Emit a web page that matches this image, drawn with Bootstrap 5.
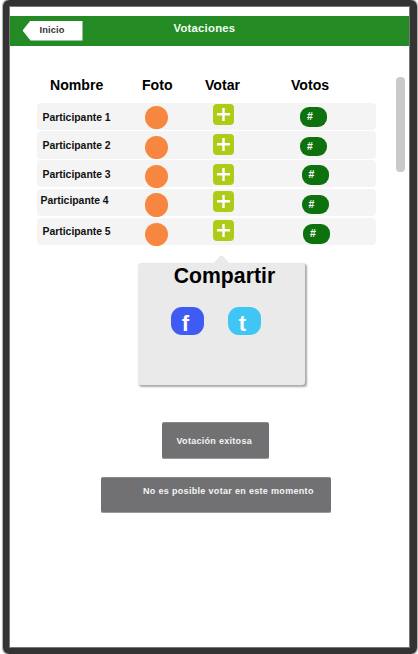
<!DOCTYPE html>
<html lang="es">
<head>
<meta charset="utf-8">
<meta name="viewport" content="width=device-width, initial-scale=1">
<title>Votaciones</title>
<link href="https://cdn.jsdelivr.net/npm/bootstrap@5.3.0/dist/css/bootstrap.min.css" rel="stylesheet">
<style>
body{font-family:"Liberation Sans",Arial,sans-serif;font-weight:700;color:#111;line-height:1;background:#fff}
.device{width:414px;height:654px;margin-left:3px;border:6px solid #333;border-width:6.5px 7px 6px 6px;border-radius:6px;box-shadow:0 0 1px 1px #aaa,inset 0 0 0 1px #777;padding:9.5px 1px 0 1px}
.topbar{height:30px;background:#248a24;padding:5px 0 0 12.5px}
.back{width:60px;height:20px;padding:1px 0 0 17px;background:#fff;color:#333;font-size:9.3px;letter-spacing:.12px;clip-path:polygon(0 50%,8px 0,100% 0,100% 100%,8px 100%)}
.bar-title{margin:2px 0 0 91px;font-size:11.3px;letter-spacing:.24px;color:#f2fff2;line-height:11px}
.board{margin:31px 0 0 26.5px}
.roster{width:339px}
.cols{display:grid;grid-template-columns:109px 67.5px 87px 75px}
.heads{font-size:14.1px;height:26px;line-height:16px;color:#000}
.heads span:nth-child(1){padding-left:13.5px}
.heads span:nth-child(2){margin-left:-3.5px}
.heads span:nth-child(3){margin-left:-8px}
.heads span:nth-child(4){margin-left:-9px}
.entry{height:27.4px;margin-bottom:1.4px;background:#f4f4f4;border-radius:4px;align-items:start}
.who{font-size:10.4px;padding-left:6px;line-height:12px;margin-top:9px}
.face,.vote,.count{position:relative;z-index:1}
.face{width:23.4px;height:23.4px;margin-left:-.5px;border-radius:50%;background:#f78640}
.vote{width:21px;height:21px;border:0;padding:0;border-radius:4px;background:#adcb17;display:block}
.vote svg{display:block}
.count{width:27px;height:19.4px;border-radius:9px;background:#0d720d;color:#fff;font-size:10.5px;line-height:19px;padding-left:7px}
.r1 .face{margin-top:3.5px}.r1 .vote{margin-top:1.2px}.r1 .count{margin-top:4.9px}
.r2 .face{margin-top:4.8px}.r2 .vote{margin-top:2.4px}.r2 .count{margin-top:5.4px}
.r3 .face{margin-top:4.8px}.r3 .vote{margin-top:3.6px}.r3 .count{margin:5.2px 0 0 1.5px}
.r4 .face{margin-top:4.4px}.r4 .vote{margin-top:2.5px}.r4 .count{margin:6px 0 0 1.5px}
.r5 .face{margin-top:5.4px}.r5 .vote{margin-top:2.7px}.r5 .count{margin:6.8px 0 0 3px}
.r4 .who{padding-left:4px;margin-top:6.2px;height:10.9px;overflow:hidden}
.r5 .who{margin-top:8px}
.scroller{width:9px;height:95px;border-radius:4px;background:#cacaca;margin-left:20.5px}
.share{margin:8.5px 0 0 128px;width:167px}
.tip{display:block;margin-left:76px}
.panel{height:122px;background:#eaeaea;border-radius:3px;box-shadow:1.5px 1.5px 2px #aaa}
.panel h2{font-size:21.2px;font-weight:700;color:#000;letter-spacing:.05px;line-height:26px;margin:0;padding-left:6px}
.social{width:33px;height:28px;border-radius:11px;color:#fff;font-size:22px;line-height:33px;padding:0 3px 0 0;text-align:center;text-decoration:none}
.fb{background:#3f5bf3;margin:10.5px 0 0 32.5px}
.tw{background:#40c6f5;margin:9.7px 0 0 24px}
.notice{background:#717173;color:#f4f4f4;font-size:9px;border-radius:2px;border-bottom:1px solid #999;border-top:1px solid #8b8b8b}
.ok{width:107px;height:37px;margin:37px 0 0 152px;padding:14px 0 0 14.5px;letter-spacing:.29px}
.fail{width:230px;height:36px;margin:18px 0 0 90.5px;padding:9px 0 0 42.5px;letter-spacing:.32px}
</style>
</head>
<body class="overflow-hidden">
<main class="device">
  <header class="topbar d-flex align-items-start">
    <a class="back d-flex align-items-center text-decoration-none" href="#">Inicio</a>
    <h1 class="bar-title fw-bold mb-0">Votaciones</h1>
  </header>
  <section class="board d-flex">
    <div class="roster">
      <div class="cols heads"><span>Nombre</span><span>Foto</span><span>Votar</span><span>Votos</span></div>
      <div class="cols entry r1"><span class="who">Participante 1</span><span class="face"></span><button class="vote" aria-label="Votar"><svg width="21" height="21"><path d="M4 10.3h13M10.5 4v13" stroke="#fff" stroke-width="2.4"/></svg></button><span class="count">#</span></div>
      <div class="cols entry r2"><span class="who">Participante 2</span><span class="face"></span><button class="vote" aria-label="Votar"><svg width="21" height="21"><path d="M4 10.3h13M10.5 4v13" stroke="#fff" stroke-width="2.4"/></svg></button><span class="count">#</span></div>
      <div class="cols entry r3"><span class="who">Participante 3</span><span class="face"></span><button class="vote" aria-label="Votar"><svg width="21" height="21"><path d="M4 10.3h13M10.5 4v13" stroke="#fff" stroke-width="2.4"/></svg></button><span class="count">#</span></div>
      <div class="cols entry r4"><span class="who">Participante 4</span><span class="face"></span><button class="vote" aria-label="Votar"><svg width="21" height="21"><path d="M4 10.3h13M10.5 4v13" stroke="#fff" stroke-width="2.4"/></svg></button><span class="count">#</span></div>
      <div class="cols entry r5"><span class="who">Participante 5</span><span class="face"></span><button class="vote" aria-label="Votar"><svg width="21" height="21"><path d="M4 10.3h13M10.5 4v13" stroke="#fff" stroke-width="2.4"/></svg></button><span class="count">#</span></div>
    </div>
    <div class="scroller"></div>
  </section>
  <section class="share">
    <svg class="tip" width="15" height="8"><path d="M0 8L6 1Q7.500 0 9 1L15 8Z" fill="#eaeaea"/></svg>
    <div class="panel">
      <h2 class="text-center">Compartir</h2>
      <div class="d-flex align-items-start pt-2">
        <a class="social fb" href="#" aria-label="Facebook">f</a>
        <a class="social tw" href="#" aria-label="Twitter">t</a>
      </div>
    </div>
  </section>
  <div class="notice ok">Votación exitosa</div>
  <div class="notice fail text-nowrap">No es posible votar en este momento</div>
</main>
<script src="https://cdn.jsdelivr.net/npm/bootstrap@5.3.0/dist/js/bootstrap.bundle.min.js"></script>
</body>
</html>
